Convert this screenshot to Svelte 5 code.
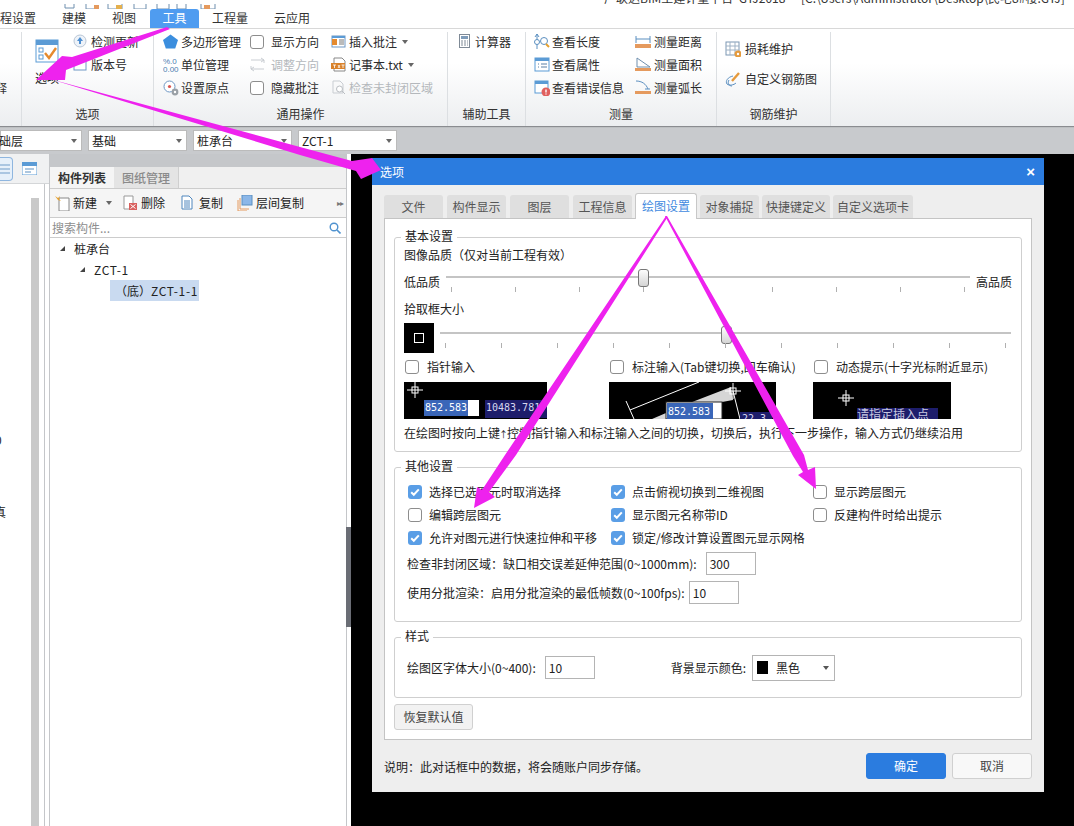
<script>
  const icons = {
    options: '<rect x="1" y="1" width="22" height="22" fill="#fff" stroke="#5b9bd5"/><rect x="1" y="1" width="22" height="5" fill="#5b9bd5"/><rect x="4" y="9" width="4" height="4" fill="none" stroke="#5b9bd5"/><rect x="4" y="16" width="4" height="4" fill="none" stroke="#5b9bd5"/><path d="M10 14l4 5 7-10" fill="none" stroke="#e58a2e" stroke-width="2.4"/>',
    update: '<circle cx="7" cy="7" r="6" fill="#eef3f9" stroke="#b9c6d6"/><path d="M7 3l3 4H8v3H6V7H4z" fill="#4f8fd1"/>',
    version: '<rect x="1" y="2" width="12" height="11" fill="#fff" stroke="#6e97c4"/><rect x="1" y="2" width="12" height="3" fill="#e58a2e"/>',
    polygon: '<path d="M7.5 0.500L15 6l-2.800 8.500H2.800L0 6z" fill="#3b8ede"/>',
    unit: '<text x="0" y="7" font-size="8" fill="#4a7db0" font-family="Liberation Sans">%.0</text><text x="0" y="15" font-size="8" fill="#4a7db0" font-family="Liberation Sans">0.00</text>',
    origin: '<circle cx="6.5" cy="6.5" r="5.5" fill="#fff" stroke="#6e97c4"/><circle cx="6.5" cy="6.5" r="1.6" fill="#d9534f"/><circle cx="12" cy="12" r="3.4" fill="#9aa0a6"/><circle cx="12" cy="12" r="1.2" fill="#fff"/>',
    adjust: '<path d="M1 3h13v3M14 12H1V9M11 1l3 2-3 2M4 10l-3 2 3 2" fill="none" stroke="#c9cdd2"/>',
    note: '<rect x="1" y="2" width="13" height="11" fill="#fff" stroke="#6e97c4"/><rect x="1" y="2" width="13" height="2" fill="#5b9bd5"/><rect x="1" y="5" width="5" height="6" fill="#e58a2e"/><path d="M8 6h5M8 8h5M8 10h5" stroke="#777"/>',
    txt: '<path d="M3 1h8l3 3v10H3z" fill="#fff" stroke="#888"/><rect x="0" y="6" width="14" height="6" fill="#d9822b"/><path d="M2 8h3M3.5 8v3M7 8l2 3M9 8l-2 3M10.500 8h3M12 8v3" stroke="#fff" stroke-width=".8"/>',
    check: '<path d="M2 1h7l3 3v9H2z" fill="none" stroke="#c9cdd2"/><circle cx="8.500" cy="9" r="3" fill="#fff" stroke="#b9bdc2"/><path d="M11 11l3 3" stroke="#b9bdc2"/>',
    calc: '<rect x="1.500" y=".5" width="10" height="13" fill="#fff" stroke="#7f8a96"/><rect x="3" y="2" width="7" height="3" fill="#7f9cba"/><path d="M3 7h2M6 7h2M9 7h1M3 9h2M6 9h2M9 9h1M3 11h2M6 11h2M9 11h1" stroke="#7f8a96"/>',
    len: '<path d="M3 0v15M1 3l2-3 2 3" fill="none" stroke="#5b8fc0"/><circle cx="3" cy="8" r="2.500" fill="#fff" stroke="#5b8fc0"/><circle cx="10" cy="7" r="3.500" fill="#fff" stroke="#5b8fc0"/><path d="M12 10l3 3" stroke="#e5a02e" stroke-width="2"/>',
    prop: '<rect x="1" y="1" width="14" height="13" fill="#fff" stroke="#5b9bd5"/><rect x="1" y="1" width="14" height="3" fill="#5b9bd5"/><path d="M4 7h1M7 7h6M4 10h1M7 10h6" stroke="#5b7ea5"/>',
    err: '<rect x="1" y="1" width="13" height="12" fill="#fff" stroke="#5b9bd5"/><rect x="1" y="1" width="13" height="3" fill="#5b9bd5"/><circle cx="12" cy="12" r="4.500" fill="#e0605e"/><path d="M12 9.500v3M12 13.500v1" stroke="#fff" stroke-width="1.400"/>',
    dist: '<path d="M1 2v7M15 2v7M1 5h14" fill="none" stroke="#5b8fc0"/><rect x="0" y="10" width="16" height="4" fill="#e59a5e"/>',
    area: '<path d="M2 1v9h13z" fill="#fff" stroke="#6f8fae"/><rect x="0" y="11" width="16" height="3" fill="#e59a5e"/>',
    arc: '<path d="M1 1c6 0 10 3 12 8" fill="none" stroke="#5b8fc0"/><path d="M10 9h5" stroke="#5b8fc0"/><rect x="0" y="11" width="16" height="3" fill="#e59a5e"/>',
    loss: '<rect x="1" y="1" width="13" height="13" fill="#fff" stroke="#7d97b3"/><path d="M1 5h13M1 9h13M5 1v13M10 1v13" stroke="#9fb2c5"/><circle cx="13" cy="13" r="3.500" fill="#e59a3c"/><circle cx="13" cy="13" r="1.200" fill="#fff"/>',
    custom: '<path d="M8 5C3 6 0 10 2 13c2 2 7 1 9-1M4 9c-2 3 0 6 3 6" fill="none" stroke="#5b8fc0"/><path d="M7 10l7-8" stroke="#e59a3c" stroke-width="2.400"/>',
    newdoc: '<path d="M5 3h10v13H5z" fill="#fff" stroke="#888"/><path d="M1 1l3 2 2-2-1 3 2 2-3-1z" fill="#e5a02e"/>',
    del: '<path d="M2 1h9v13H2z" fill="#fff" stroke="#999"/><rect x="7" y="8" width="8" height="7" fill="#d9605e"/><path d="M8.500 9.500l5 4M13.500 9.500l-5 4" stroke="#fff"/>',
    copy: '<path d="M2 1h7l3 3v10H2z" fill="#fff" stroke="#4f86bd"/><path d="M4 6h6M4 8h6M4 10h6M4 12h6" stroke="#4f86bd"/>',
    floorcopy: '<rect x="5" y="0" width="10" height="10" fill="#8cb7e8" stroke="#5b8fc0"/><path d="M3 3v11h9M1 5v11h9" fill="none" stroke="#e59a5e"/>',
    search: '<circle cx="5" cy="5" r="3.800" fill="none" stroke="#4f92cf" stroke-width="1.400"/><path d="M8 8l3.500 3.500" stroke="#4f92cf" stroke-width="1.600"/>'
  };

  const groupTabs = ['文件', '构件显示', '图层', '工程信息', '绘图设置', '对象捕捉', '快捷键定义', '自定义选项卡'];
  const ticksA = Array(9).fill(0);
  const ticksB = Array(11).fill(0);
  const otherRows = [
    [['选择已选图元时取消选择', true], ['点击俯视切换到二维视图', true], ['显示跨层图元', false]],
    [['编辑跨层图元', false], ['显示图元名称带ID', true], ['反建构件时给出提示', false]],
    [['允许对图元进行快速拉伸和平移', true], ['锁定/修改计算设置图元显示网格', true], ['', null]]
  ];
</script>

{#snippet ico(name, w = 16, h = 16)}
  <svg class="ico" width={w} height={h} viewBox="0 0 {w} {h}">{@html icons[name]}</svg>
{/snippet}

{#snippet item(name, label, cls = '')}
  <div class="item {cls}">
    <span class="slot">{@render ico(name)}</span><span>{label}</span>
    {#if cls.includes('caret')}<i class="tri"></i>{/if}
  </div>
{/snippet}

{#snippet cb(on, cls = '')}
  <span class="cb {cls}" class:on>
    {#if on}
      <svg width="14" height="14" viewBox="0 0 14 14"><path d="M3.200 7.200l2.600 2.600 5-5.400" fill="none" stroke="#fff" stroke-width="2"/></svg>
    {/if}
  </span>
{/snippet}

{#snippet cross(x, y)}
  <path d="M{x - 8} {y}h16M{x} {y - 8}v16" stroke="#fff" fill="none"/>
  <rect x={x - 3} y={y - 3} width="6" height="6" fill="none" stroke="#fff"/>
{/snippet}

<div class="app">
  <div class="titlebar">
    <div class="qat">
      <svg width="170" height="9" viewBox="0 0 170 9"><path d="M5 0v4h9V0M26 0v5h12M48 0v5h14V0M74 0v5h12V0M97 0v5h12V0M117 0v5h9V0M141 0v5h14V0" fill="none" stroke="#6f8fae"/><rect x="34" y="1" width="5" height="4" fill="#e59a5e"/><rect x="56" y="1" width="6" height="4" fill="#e5b04e"/><rect x="144" y="1" width="6" height="4" fill="#e59a5e"/></svg>
    </div>
    <div class="apptitle">广联达BIM土建计量平台 GTJ2018 - [C:\Users\Administrator\Desktop\民宅8#楼.GTJ]</div>
  </div>

  <nav class="tabs">
    <span class="tab clip">工程设置</span>
    <span class="tab">建模</span>
    <span class="tab">视图</span>
    <span class="tab active">工具</span>
    <span class="tab">工程量</span>
    <span class="tab">云应用</span>
  </nav>

  <div class="ribbon">
    <section class="grp g0"><div class="body"><div class="cut">释</div></div><div class="glabel"></div></section>

    <section class="grp g1">
      <div class="body">
        <div class="big">
          {@render ico('options', 24, 24)}
          <span>选项</span>
        </div>
        <div class="col">
          {@render item('update', '检测更新')}
          {@render item('version', '版本号')}
        </div>
      </div>
      <div class="glabel">选项</div>
    </section>

    <section class="grp g2">
      <div class="body">
        <div class="col c1">
          {@render item('polygon', '多边形管理')}
          {@render item('unit', '单位管理')}
          {@render item('origin', '设置原点')}
        </div>
        <div class="col c2">
          <div class="item">{@render cb(false)}<span>显示方向</span></div>
          <div class="item off"><span class="slot2">{@render ico('adjust')}</span><span>调整方向</span></div>
          <div class="item">{@render cb(false)}<span>隐藏批注</span></div>
        </div>
        <div class="col c3">
          {@render item('note', '插入批注', 'caret')}
          {@render item('txt', '记事本.txt', 'caret')}
          {@render item('check', '检查未封闭区域', 'off')}
        </div>
      </div>
      <div class="glabel">通用操作</div>
    </section>

    <section class="grp g3">
      <div class="body"><div class="col">{@render item('calc', '计算器')}</div></div>
      <div class="glabel">辅助工具</div>
    </section>

    <section class="grp g4">
      <div class="body">
        <div class="col m1">
          {@render item('len', '查看长度')}
          {@render item('prop', '查看属性')}
          {@render item('err', '查看错误信息')}
        </div>
        <div class="col m2">
          {@render item('dist', '测量距离')}
          {@render item('area', '测量面积')}
          {@render item('arc', '测量弧长')}
        </div>
      </div>
      <div class="glabel">测量</div>
    </section>

    <section class="grp g5">
      <div class="body">
        <div class="col wide">
          {@render item('loss', '损耗维护')}
          {@render item('custom', '自定义钢筋图')}
        </div>
      </div>
      <div class="glabel">钢筋维护</div>
    </section>
    <div class="rest"></div>
  </div>

  <div class="combos">
    <div class="combo first"><span>基础层</span><i class="tri"></i></div>
    <div class="combo"><span>基础</span><i class="tri"></i></div>
    <div class="combo"><span>桩承台</span><i class="tri"></i></div>
    <div class="combo"><span>ZCT-1</span><i class="tri"></i></div>
  </div>

  <div class="main">
    <aside class="leftrail">
      <div class="railhead">
        <span class="railbtn"><svg width="12" height="22" viewBox="0 0 12 22"><path d="M0 7h10M0 11h10M0 15h10" stroke="#6f9cc9"/></svg></span>
        <svg width="15" height="13" viewBox="0 0 15 13"><rect width="15" height="13" fill="#fff" stroke="#5b9bd5"/><rect width="15" height="4" fill="#5b9bd5"/><path d="M3 7h9M3 10h6" stroke="#5b8fc0"/></svg>
      </div>
      <div class="railbody">
        <div class="frag f1">0</div>
        <div class="frag f2">真</div>
        <div class="rail-scroll"></div>
      </div>
    </aside>

    <aside class="panel">
      <div class="phead"></div>
      <div class="ptabs"><span class="ptab on">构件列表</span><span class="ptab">图纸管理</span></div>
      <div class="ptools">
        <span class="pt n1">{@render ico('newdoc')}<span>新建</span><i class="tri"></i></span>
        <span class="pt n2">{@render ico('del')}<span>删除</span></span>
        <span class="pt n3">{@render ico('copy')}<span>复制</span></span>
        <span class="pt n4">{@render ico('floorcopy')}<span>层间复制</span></span>
        <span class="more">▸▸</span>
      </div>
      <div class="psearch"><span>搜索构件...</span>{@render ico('search', 12, 12)}</div>
      <div class="tree">
        <div class="node l0"><i class="ntri"></i>桩承台</div>
        <div class="node l1"><i class="ntri"></i><span class="lat">ZCT-1</span></div>
        <div class="node l2"><span class="sel">（底）<span class="lat">ZCT-1-1</span></span></div>
      </div>
    </aside>

    <div class="split"><span class="grip"></span></div>

    <div class="canvas">
      <div class="dialog">
        <header class="dhead"><span>选项</span><span class="close">×</span></header>
        <div class="dbody">
          <div class="dtabs">
            {#each groupTabs as t, i}
              <span class="dtab t{i}" class:on={i === 4}>{t}</span>
            {/each}
          </div>
          <div class="pane">
            <div class="box basic">
              <span class="legend">基本设置</span>
              <div class="line">图像品质（仅对当前工程有效）</div>
              <div class="sl-row a">
                <span class="sl-label">低品质</span>
                <div class="slider sa">
                  <span class="track"></span>
                  <span class="thumb" style="left: 192px"></span>
                  <div class="ticks">{#each ticksA as _}<i></i>{/each}</div>
                </div>
                <span class="sl-label r">高品质</span>
              </div>
              <div class="line">拾取框大小</div>
              <div class="sl-row b">
                <span class="pick"><i></i></span>
                <div class="slider sb">
                  <span class="track"></span>
                  <span class="thumb" style="left: 281px"></span>
                  <div class="ticks">{#each ticksB as _}<i></i>{/each}</div>
                </div>
              </div>
              <div class="inputs">
                <div class="ic i1">
                  <label>{@render cb(false)}<span>指针输入</span></label>
                  <svg class="pv" width="143" height="37" viewBox="0 0 143 37">
                    <rect width="143" height="37" fill="#000"/>
                    {@render cross(11, 8)}
                    <rect x="20" y="18" width="55" height="16" fill="#fff"/>
                    <rect x="20" y="18" width="44" height="16" fill="#3a66b8"/>
                    <text x="21" y="29" class="mono" fill="#fff">852.583</text>
                    <rect x="81" y="18" width="62" height="18" fill="#1d1d6b"/>
                    <text x="82" y="29" class="mono" fill="#d8d8f0">10483.781</text>
                  </svg>
                </div>
                <div class="ic i2">
                  <label>{@render cb(false)}<span>标注输入(Tab键切换,回车确认)</span></label>
                  <svg class="pv" width="167" height="37" viewBox="0 0 167 37">
                    <rect width="167" height="37" fill="#000"/>
                    <polygon points="43,37 78,22 122,5 124,18 113,20 57,20 57,37" fill="#d6d6d6"/>
                    <path d="M21 28L90 0M17 19l8 18M124 9l7 28" stroke="#fff" fill="none"/>
                    {@render cross(124, 9)}
                    <rect x="57" y="20" width="56" height="17" fill="#fff" stroke="#222"/>
                    <rect x="58" y="21" width="46" height="16" fill="#3a66b8"/>
                    <text x="59" y="33" class="mono" fill="#fff">852.583</text>
                    <rect x="131" y="30" width="32" height="7" fill="#1d1d6b"/>
                    <text x="133" y="40" class="mono" fill="#d8d8f0">22.3</text>
                  </svg>
                </div>
                <div class="ic i3">
                  <label>{@render cb(false)}<span>动态提示(十字光标附近显示)</span></label>
                  <svg class="pv" width="138" height="37" viewBox="0 0 138 37">
                    <rect width="138" height="37" fill="#000"/>
                    {@render cross(33, 16)}
                    <rect x="44" y="26" width="81" height="11" fill="#1d1d6b"/>
                    <text x="44" y="37" class="cjk" fill="#c8c8e0">请指定插入点</text>
                  </svg>
                </div>
              </div>
              <div class="line help">在绘图时按向上键<span class="up">↑</span>控制指针输入和标注输入之间的切换，切换后，执行下一步操作，输入方式仍继续沿用</div>
            </div>

            <div class="box other">
              <span class="legend">其他设置</span>
              <div class="checks">
                {#each otherRows as row}
                  {#each row as cell}
                    <label class="ck">
                      {#if cell[1] !== null}{@render cb(cell[1])}{/if}
                      <span>{cell[0]}</span>
                    </label>
                  {/each}
                {/each}
              </div>
              <div class="field f-a"><span>检查非封闭区域：缺口相交误差延伸范围(0~1000mm):</span><span class="input">300</span></div>
              <div class="field f-b"><span>使用分批渲染：启用分批渲染的最低帧数(0~100fps):</span><span class="input">10</span></div>
            </div>

            <div class="box style">
              <span class="legend">样式</span>
              <div class="field-row">
                <span>绘图区字体大小(0~400):</span>
                <span class="input small">10</span>
                <span class="bglabel">背景显示颜色:</span>
                <span class="colorbox"><i class="swatch"></i><span>黑色</span><i class="tri"></i></span>
              </div>
            </div>

            <button class="btn reset">恢复默认值</button>
          </div>
          <footer class="dfoot">
            <span class="note">说明：此对话框中的数据，将会随账户同步存储。</span>
            <button class="btn ok">确定</button>
            <button class="btn cancel">取消</button>
          </footer>
        </div>
      </div>
    </div>
  </div>

  <svg class="arrows" width="1074" height="826" viewBox="0 0 1074 826">
    <g fill="#ee22ee">
      <polygon points="167,27 72,57 62,56 36,80 65,80 66,70 170,29"/>
      <polygon points="50,79 300,147 352,161 372,158 381,170 361,179 356,171 300,155"/>
      <polygon points="666,216 667,218 516,455 489,492 495,497 474,508 477,487 482,490 505,455"/>
      <polygon points="665,216 667,216 804,455 808,470 815,467 816,489 798,475 803,472 793,456"/>
    </g>
  </svg>
</div>

<style>
  :global(body) {
    margin: 0;
    background: #fff;
  }
  .app {
    position: relative;
    width: 1074px;
    height: 826px;
    overflow: hidden;
    display: flex;
    flex-direction: column;
    background: #fff;
    color: #222;
    font: 12px/16px "Noto Sans CJK SC", "Liberation Sans", sans-serif;
  }
  .titlebar {
    height: 9px;
    display: flex;
    overflow: hidden;
    flex: none;
  }
  .qat {
    width: 604px;
    padding-left: 60px;
    box-sizing: border-box;
    flex: none;
  }
  .apptitle {
    margin-top: -10px;
    white-space: nowrap;
    color: #333;
    word-spacing: 3px;
  }
  .tabs {
    height: 19px;
    flex: none;
    display: flex;
    align-items: stretch;
    border-bottom: 1px solid #d8d8d8;
    font-size: 12px;
    line-height: 18px;
  }
  .tab {
    padding: 0 12px;
    width: 24px;
    text-align: center;
    color: #333;
    white-space: nowrap;
  }
  .tab.clip {
    width: 48px;
    margin-left: -12px;
    padding: 0;
    margin-right: 14px;
  }
  .tab:nth-child(3) {
    margin-left: 2px;
  }
  .tab.active {
    background: #4f9cf0;
    color: #fff;
    border-radius: 3px 3px 0 0;
    margin: 0 1px 0 2px;
    width: 49px;
    padding: 0;
  }
  .tab:nth-child(5) {
    width: 36px;
  }
  .tab:nth-child(6) {
    width: 36px;
    margin-left: 2px;
  }
  .ribbon {
    height: 97px;
    flex: none;
    display: flex;
    background: linear-gradient(#fff 35%, #eceef0);
    box-shadow: 0 1px 1px #8a8c90;
    position: relative;
    z-index: 1;
  }
  .grp {
    flex: none;
    display: flex;
    flex-direction: column;
    border-right: 1px solid #dcdfe2;
    box-sizing: border-box;
    margin-top: 3px;
  }
  .body {
    height: 76px;
    margin-top: -3px;
    display: flex;
    padding-top: 1px;
    box-sizing: border-box;
  }
  .glabel {
    text-align: center;
    height: 21px;
    line-height: 18px;
    color: #333;
  }
  .g0 { width: 22px; overflow: hidden; }
  .g1 { width: 132px; }
  .g2 { width: 294px; }
  .g3 { width: 78px; }
  .g4 { width: 191px; }
  .g5 { width: 114px; }
  .rest { flex: 1; }
  .cut {
    margin: 50px 0 0 -5px;
    color: #333;
  }
  .big {
    width: 24px;
    margin: 9px 0 0 13px;
    display: flex;
    flex-direction: column;
    gap: 7px;
    align-items: center;
  }
  .big span { white-space: nowrap; }
  .col {
    display: flex;
    flex-direction: column;
  }
  .item {
    height: 23px;
    display: flex;
    align-items: center;
    white-space: nowrap;
    color: #2b2b2b;
  }
  .item .slot {
    width: 17px;
    display: flex;
    margin-right: 1px;
  }
  .item.off { color: #b4b8bc; }
  .ico { display: block; flex: none; }
  .g1 .col { margin: 0 0 0 14px; }
  .c1 { margin-left: 9px; }
  .c2 { margin-left: 9px; }
  .c2 .item { gap: 7px; }
  .slot2 { width: 14px; display: flex; }
  .c3 { margin-left: 12px; }
  .caret .tri { margin-left: 5px; }
  .g3 .col { margin-left: 10px; }
  .g3 :global(.slot) { width: 16px; }
  .m1 { margin-left: 8px; width: 101px; }
  .m2 :global(.slot) { margin-right: 2px; }
  .wide { margin-left: 8px; padding-top: 4px; }
  .wide :global(.item) { height: 30px; }
  .wide :global(.slot) { margin-right: 3px; }
  .tri {
    display: inline-block;
    width: 0;
    height: 0;
    border: 3px solid transparent;
    border-top: 4px solid #666;
    border-bottom: 0;
    flex: none;
  }
  .combos {
    height: 28px;
    flex: none;
    display: flex;
    gap: 6px;
    padding: 4px 0 0 0;
    box-sizing: border-box;
    background: #c8cacd;
  }
  .combo {
    width: 99px;
    height: 21px;
    background: #fff;
    border: 1px solid #bbb;
    box-sizing: border-box;
    display: flex;
    align-items: center;
    justify-content: space-between;
    padding: 0 4px 0 3px;
  }
  .combo.first { width: 82px; }
  .combo.first span { margin-left: -17px; }
  .main {
    flex: 1;
    display: flex;
    min-height: 0;
    background: #fff;
  }
  .leftrail {
    width: 45px;
    flex: none;
    border-right: 1px solid #c4c6c9;
    box-sizing: border-box;
    display: flex;
    flex-direction: column;
    margin-right: 4px;
  }
  .railhead {
    height: 29px;
    display: flex;
    align-items: center;
    gap: 9px;
    background: #f0f1f2;
    border-bottom: 1px solid #d4d6d8;
    flex: none;
    margin-right: -5px;
  }
  .railbtn {
    width: 12px;
    height: 22px;
    display: block;
    border: 1px solid #8fb6df;
    border-left: 0;
    border-radius: 0 4px 4px 0;
    background: #e6f0fa;
  }
  .railbody {
    flex: 1;
    position: relative;
  }
  .rail-scroll {
    position: absolute;
    left: 31px;
    top: 14px;
    bottom: 0;
    width: 8px;
    background: #c9c9c9;
  }
  .frag {
    position: absolute;
    left: -6px;
    color: #222;
  }
  .f1 { top: 248px; left: -5px; }
  .f2 { top: 320px; }
  .panel {
    width: 296px;
    flex: none;
    display: flex;
    flex-direction: column;
    border-left: 1px solid #c4c6c9;
    border-right: 1px solid #c4c6c9;
    box-sizing: content-box;
  }
  .phead {
    height: 13px;
    background: #c5c7ca;
    flex: none;
  }
  .ptabs {
    height: 21px;
    flex: none;
    display: flex;
    background: #f0f0f0;
    line-height: 21px;
  }
  .ptab {
    width: 64px;
    text-align: center;
    background: #e4e4e4;
    color: #8a8a8a;
    border-right: 1px solid #cfcfcf;
    font-weight: 500;
  }
  .ptab.on {
    background: #f5f5f5;
    color: #333;
    font-weight: 700;
    border-right: 0;
  }
  .ptools {
    height: 30px;
    flex: none;
    display: flex;
    align-items: center;
    position: relative;
    background: #f5f5f5;
    border-top: 1px solid #ccc;
    border-bottom: 1px solid #ccc;
    box-sizing: border-box;
  }
  .pt {
    display: inline-flex;
    align-items: center;
    gap: 3px;
  }
  .n1 { margin-left: 4px; width: 68px; }
  .n1 .tri { margin-left: 6px; }
  .n2 { width: 58px; }
  .n3 { width: 57px; }
  .more {
    margin-left: auto;
    color: #777;
    font-size: 8px;
    letter-spacing: -1px;
    padding-right: 3px;
  }
  .psearch {
    height: 19px;
    flex: none;
    display: flex;
    align-items: center;
    justify-content: space-between;
    padding: 0 5px 0 2px;
    color: #8e8e8e;
    border-bottom: 1px solid #ccc;
  }
  .node {
    height: 21px;
    display: flex;
    align-items: center;
    white-space: nowrap;
    color: #222;
  }
  .node.l0 { padding-left: 10px; }
  .node.l1 { padding-left: 30px; }
  .node.l2 { padding-left: 60px; }
  .ntri {
    width: 0;
    height: 0;
    border-left: 5px solid transparent;
    border-bottom: 5px solid #444;
    margin-right: 9px;
  }
  .lat { letter-spacing: .7px; }
  .sel {
    display: block;
    width: 89px;
    height: 21px;
    line-height: 21px;
    background: #c9daf0;
    white-space: nowrap;
    overflow: hidden;
    text-indent: 5px;
  }
  .split {
    width: 4px;
    flex: none;
    position: relative;
    background: #fff;
    margin-left: -1px;
    border-left: 1px solid #c4c6c9;
    box-sizing: content-box;
  }
  .grip {
    position: absolute;
    left: -1px;
    right: 0;
    top: 373px;
    height: 100px;
    background: #6a6d75;
  }
  .canvas {
    flex: 1;
    background: #000;
    padding: 4px 30px 0 21px;
    min-width: 0;
  }
  .dialog {
    height: 634px;
    display: flex;
    flex-direction: column;
    background: #eee;
  }
  .dhead {
    height: 27px;
    flex: none;
    background: #2b7cdf;
    color: #fff;
    display: flex;
    align-items: center;
    justify-content: space-between;
    padding: 0 8px;
  }
  .close {
    font: 700 15px/1 "Liberation Sans", sans-serif;
    padding-right: 1px;
  }
  .dbody {
    flex: 1;
    padding: 8px 12px 0;
    display: flex;
    flex-direction: column;
  }
  .dtabs {
    height: 25px;
    flex: none;
    display: flex;
    align-items: flex-end;
    gap: 4px;
    color: #555;
  }
  .dtab {
    height: 23px;
    width: 59px;
    flex: none;
    background: #dfdfdf;
    border-radius: 3px 3px 0 0;
    text-align: center;
    line-height: 23px;
    white-space: nowrap;
    box-sizing: border-box;
  }
  .dtab.on {
    height: 26px;
    width: 62px;
    margin: 0 0 -1px -1px;
    background: #fff;
    color: #3f8ae0;
    border: 1px solid #c8c8c8;
    border-bottom: 0;
    line-height: 24px;
    position: relative;
    z-index: 1;
  }
  .dtab.t5 { margin-left: -1px; }
  .dtab.t6 { width: 68px; margin-left: -1px; }
  .dtab.t7 { width: 80px; margin-left: -1px; }
  .pane {
    height: 522px;
    flex: none;
    background: #fff;
    border: 1px solid #c4c4c4;
    box-sizing: border-box;
    padding: 18px 9px 0;
  }
  .box {
    position: relative;
    border: 1px solid #cfcfcf;
    border-radius: 3px;
    box-sizing: border-box;
    padding: 0 9px;
  }
  .legend {
    position: absolute;
    left: 6px;
    top: -10px;
    background: #fff;
    padding: 0 4px;
    color: #222;
  }
  .basic {
    height: 215px;
    padding-top: 9px;
  }
  .line {
    height: 16px;
    white-space: nowrap;
    color: #222;
  }
  .up {
    font-size: 9px;
    margin: 0 -1px;
  }
  .sl-row {
    display: flex;
    position: relative;
  }
  .sl-row.a {
    height: 38px;
    gap: 6px;
  }
  .sl-label {
    margin-top: 11px;
    flex: none;
  }
  .slider {
    position: relative;
    flex: 1;
  }
  .track {
    position: absolute;
    left: 0;
    right: 0;
    height: 2px;
    background: #c4c4c4;
  }
  .sa .track { top: 13px; }
  .sa .ticks { top: 24px; padding: 0 5px; }
  .sb .track { top: 9px; }
  .sb .ticks { top: 20px; padding: 0 5px; }
  .ticks {
    position: absolute;
    left: 0;
    right: 0;
    display: flex;
    justify-content: space-between;
  }
  .ticks i {
    width: 1px;
    height: 5px;
    background: #b0b0b0;
  }
  .thumb {
    position: absolute;
    width: 11px;
    height: 18px;
    top: 0;
    box-sizing: border-box;
    border: 1px solid #777;
    border-radius: 3px;
    background: linear-gradient(#fdfdfd, #d5d5d5);
  }
  .sl-row.a .thumb { top: 6px; }
  .sl-row.b {
    height: 30px;
    gap: 6px;
    margin-top: 6px;
    padding-right: 1px;
  }
  .sl-row.b .thumb { top: 3px; }
  .pick {
    width: 30px;
    height: 30px;
    background: #000;
    display: flex;
    align-items: center;
    justify-content: center;
    flex: none;
  }
  .pick i {
    width: 10px;
    height: 10px;
    box-sizing: border-box;
    border: 1px solid #fff;
  }
  .inputs {
    display: flex;
    margin-top: 6px;
  }
  .ic { flex: none; }
  .i1 { width: 205px; }
  .i2 { width: 204px; }
  .ic label {
    display: flex;
    height: 16px;
    align-items: center;
    gap: 8px;
    white-space: nowrap;
    padding-left: 1px;
  }
  .pv {
    display: block;
    margin-top: 7px;
  }
  .mono {
    font: 10px "DejaVu Sans Mono", "Liberation Mono", monospace;
  }
  .cjk {
    font: 12px "Noto Sans CJK SC", sans-serif;
  }
  .help { margin-top: 6px; }
  .cb {
    width: 14px;
    height: 14px;
    box-sizing: border-box;
    border: 1px solid #8d8d8d;
    border-radius: 3px;
    background: #fff;
    display: inline-block;
    flex: none;
  }
  .cb.on {
    background: #5a9ee6;
    border: 0;
  }
  .cb svg { display: block; }
  .other {
    height: 155px;
    margin-top: 15px;
    padding: 12px 3px 0 13px;
  }
  .checks {
    display: grid;
    grid-template-columns: 203px 202px 1fr;
    grid-auto-rows: 23px;
  }
  .ck {
    display: flex;
    align-items: center;
    gap: 7px;
    white-space: nowrap;
  }
  .field {
    display: flex;
    align-items: center;
    white-space: nowrap;
    margin-left: -1px;
    gap: 9px;
  }
  .f-a { margin-top: 3px; height: 23px; }
  .f-b { margin-top: 6px; height: 23px; gap: 4px; }
  .input {
    width: 50px;
    height: 23px;
    line-height: 21px;
    border: 1px solid #b4b4b4;
    box-sizing: border-box;
    padding-left: 3px;
    flex: none;
    background: #fff;
  }
  .style {
    height: 61px;
    margin-top: 15px;
    padding: 16px 0 0 12px;
  }
  .field-row {
    display: flex;
    align-items: center;
    height: 27px;
    white-space: nowrap;
  }
  .input.small { margin-left: 9px; }
  .bglabel { margin-left: 76px; }
  .colorbox {
    width: 83px;
    height: 26px;
    margin-left: 6px;
    border: 1px solid #b4b4b4;
    box-sizing: border-box;
    display: flex;
    align-items: center;
    padding: 0 5px 0 4px;
  }
  .swatch {
    width: 11px;
    height: 13px;
    background: #000;
    margin-right: 8px;
    flex: none;
  }
  .colorbox .tri { margin-left: auto; border-top-color: #555; }
  .btn {
    font: inherit;
    color: #444;
    border: 1px solid #d0d0d0;
    border-radius: 3px;
    background: #f8f8f8;
    padding: 0;
    height: 26px;
    width: 80px;
    display: block;
  }
  .reset {
    margin-top: 6px;
    background: #f2f2f2;
    width: 79px;
  }
  .dfoot {
    flex: 1;
    display: flex;
    align-items: flex-start;
    padding-top: 13px;
    gap: 6px;
  }
  .note {
    margin-right: auto;
    line-height: 28px;
    color: #222;
  }
  .ok {
    background: #2b7cdf;
    border-color: #2b7cdf;
    color: #fff;
  }
  .arrows {
    position: absolute;
    left: 0;
    top: 0;
    z-index: 5;
    pointer-events: none;
  }
</style>
